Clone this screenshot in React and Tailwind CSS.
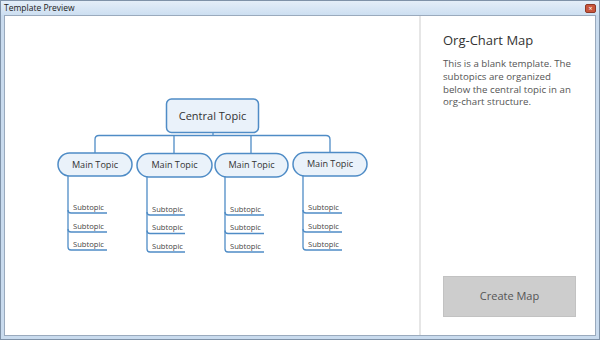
import React from "react";

const BLUE = "#4f8cc6";

function Column({ vx, us, len }) {
  const last = us[us.length - 1];
  return (
    <g>
      <path d={`M${vx} 176 V${last - 3} Q${vx} ${last} ${vx + 3} ${last} H${vx + len}`} fill="none" stroke={BLUE} strokeWidth="1.3" />
      {us.slice(0, -1).map((u) => (
        <path key={u} d={`M${vx} ${u - 3} Q${vx} ${u} ${vx + 3} ${u} H${vx + len}`} fill="none" stroke={BLUE} strokeWidth="1.3" />
      ))}
      {us.map((u) => (
        <text key={"t" + u} x={vx + 5} y={u - 3.5} fontSize="7.6" fill="#444">
          Subtopic
        </text>
      ))}
    </g>
  );
}

function Pill({ x, y, w, h }) {
  return (
    <g>
      <rect x={x} y={y} width={w} height={h} rx={h / 2} fill="#eaf2fa" stroke={BLUE} strokeWidth="1.5" />
      <text x={x + w / 2} y={y + h / 2 + 3.2} fontSize="9.1" fill="#333" textAnchor="middle">
        Main Topic
      </text>
    </g>
  );
}

export default function App() {
  return (
    <div
      className="w-[600px] h-[340px] flex flex-col bg-[#c9dbee] border border-[#7f92a8] overflow-hidden"
      style={{ fontFamily: '"Open Sans", "Noto Sans", sans-serif' }}
    >
      <div className="h-[15px] flex items-center justify-between pl-[3px] pr-[3px] bg-gradient-to-b from-[#e4eef8] to-[#cddff1]">
        <span className="text-[8.5px] text-[#222] leading-none">Template Preview</span>
        <div className="w-[11px] h-[9px] rounded-[2px] bg-[#c9563c] border border-[#8e3a28] flex items-center justify-center text-white text-[7px] leading-none">
          ×
        </div>
      </div>
      <div className="flex-1 mx-[3px] mb-[3px] bg-white border border-[#9aaabd] flex">
        <div className="w-[414px] relative">
          <svg
            width="414"
            height="319"
            viewBox="4 16 414 319"
            className="block"
            style={{ fontFamily: '"Open Sans", "Noto Sans", sans-serif' }}
          >
            <path d="M212 133 V135.5" stroke={BLUE} strokeWidth="1.3" fill="none" />
            <path d="M94 153 V139.5 Q94 135.5 98 135.5 H325 Q329 135.5 329 139.5 V152" stroke={BLUE} strokeWidth="1.3" fill="none" />
            <path d="M173 135.5 V153 M250 135.5 V153" stroke={BLUE} strokeWidth="1.3" fill="none" />
            <Column vx={67} us={[213, 232, 250]} len={39} />
            <Column vx={146} us={[215, 233.5, 252]} len={38} />
            <Column vx={224} us={[215, 233.5, 252]} len={39} />
            <Column vx={302} us={[213, 232, 250]} len={39} />
            <rect x="165.5" y="99" width="92" height="33.5" rx="5" fill="#eaf2fa" stroke={BLUE} strokeWidth="1.5" />
            <text x="211.5" y="120" fontSize="11" fill="#333" textAnchor="middle">
              Central Topic
            </text>
            <Pill x={57} y={153} w={74} h={23} />
            <Pill x={136} y={153.5} w={75} h={23.5} />
            <Pill x={214} y={153.5} w={73} h={23.5} />
            <Pill x={292} y={152.5} w={74} h={23.5} />
          </svg>
        </div>
        <div className="w-[2px] bg-[#e6e6e6]" />
        <div className="flex-1 flex flex-col pl-[22px] pr-[19px] pt-[14px] pb-[18px]">
          <div className="text-[13px] text-[#333] leading-[20px]">Org-Chart Map</div>
          <p className="mt-[8px] text-[9.7px] leading-[12.8px] text-[#555] whitespace-nowrap">
            This is a blank template. The
            <br />
            subtopics are organized
            <br />
            below the central topic in an
            <br />
            org-chart structure.
          </p>
          <div className="mt-auto h-[41px] w-[133px] bg-[#cdcdcd] border border-[#c2c2c2] flex items-center justify-center text-[11px] text-[#555]">
            Create Map
          </div>
        </div>
      </div>
    </div>
  );
}
